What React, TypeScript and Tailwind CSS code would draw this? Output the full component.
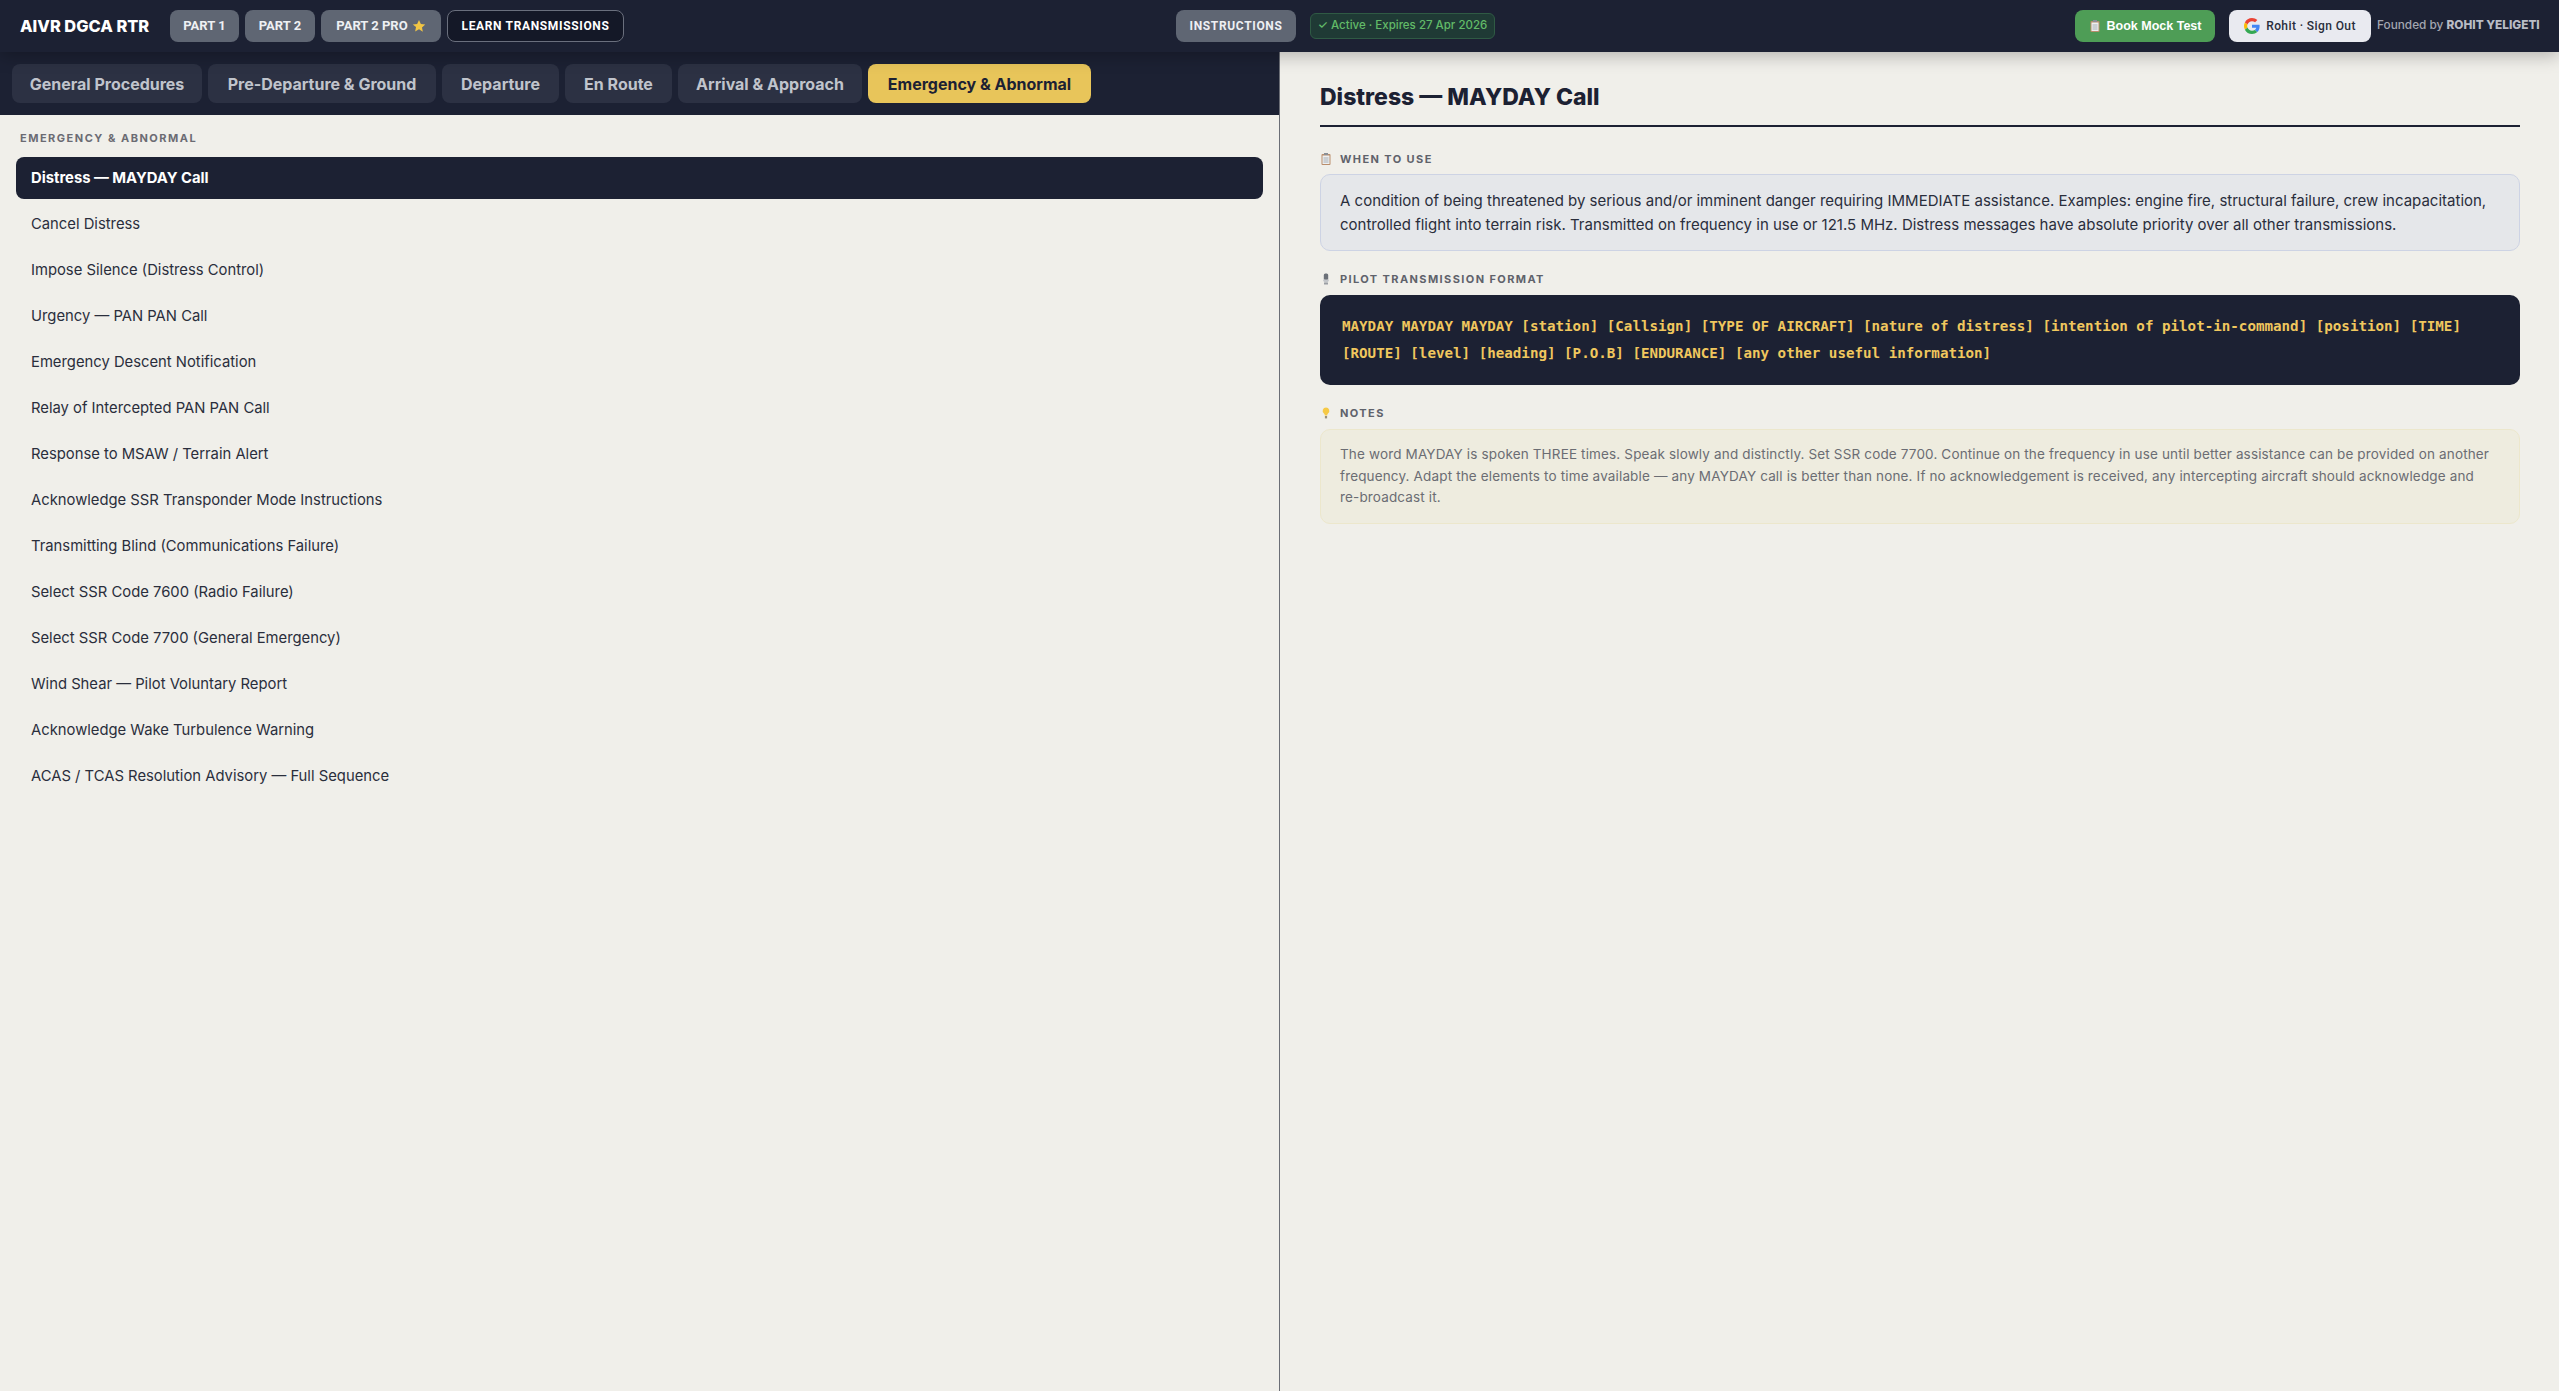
const navy = "bg-[#1c2133]";

const tabs = [
  { label: "General Procedures", width: "w-[190px]" },
  { label: "Pre-Departure & Ground", width: "w-[228px]" },
  { label: "Departure", width: "w-[117px]" },
  { label: "En Route", width: "w-[107px]" },
  { label: "Arrival & Approach", width: "w-[184px]" },
];

const items = [
  "Distress — MAYDAY Call",
  "Cancel Distress",
  "Impose Silence (Distress Control)",
  "Urgency — PAN PAN Call",
  "Emergency Descent Notification",
  "Relay of Intercepted PAN PAN Call",
  "Response to MSAW / Terrain Alert",
  "Acknowledge SSR Transponder Mode Instructions",
  "Transmitting Blind (Communications Failure)",
  "Select SSR Code 7600 (Radio Failure)",
  "Select SSR Code 7700 (General Emergency)",
  "Wind Shear — Pilot Voluntary Report",
  "Acknowledge Wake Turbulence Warning",
  "ACAS / TCAS Resolution Advisory — Full Sequence",
];

const ClipboardIcon = ({ size = 12 }: { size?: number }) => (
  <svg width={size} height={size} viewBox="0 0 12 12">
    <rect x="1.5" y="1" width="9" height="11" rx="1" fill="#b98d6b" />
    <rect x="2.5" y="2.5" width="7" height="8.5" fill="#eceff1" />
    <rect x="4" y="0" width="4" height="2" fill="#8a8f96" />
    <path d="M3.5 5h5M3.5 7h5M3.5 9h5" stroke="#9aa0a6" strokeWidth="0.8" />
  </svg>
);

const MicIcon = () => (
  <svg width="12" height="12" viewBox="0 0 12 12">
    <rect x="3.8" y="0.5" width="4.4" height="6.5" rx="1.6" fill="#6b7078" />
    <path d="M3 6.5c0 2 1.3 3 3 3s3-1 3-3" fill="#c3c6ca" />
    <rect x="4" y="9.5" width="4" height="2" fill="#9a9ea4" />
  </svg>
);

const BulbIcon = () => (
  <svg width="12" height="12" viewBox="0 0 12 12">
    <path d="M6 0.5a3.4 3.4 0 0 0-2 6.1c.5.5.7 1 .8 2h2.4c.1-1 .3-1.5.8-2a3.4 3.4 0 0 0-2-6.1z" fill="#f6c945" />
    <rect x="4.9" y="9" width="2.2" height="2.4" fill="#9a8f7a" />
  </svg>
);

const StarIcon = () => (
  <svg width="14" height="14" viewBox="0 0 24 24">
    <path d="M12 1.5l3.2 6.9 7.5.9-5.6 5.1 1.5 7.5L12 17.7l-6.6 3.7 1.5-7.5L1.300 9.300l7.500-.9z" fill="#f1c544" />
  </svg>
);

const GoogleIcon = () => (
  <svg width="16" height="16" viewBox="0 0 48 48">
    <path fill="#EA4335" d="M24 9.500c3.500 0 6.700 1.200 9.200 3.600l6.900-6.900C35.900 2.400 30.500 0 24 0 14.600 0 6.500 5.400 2.600 13.200l8 6.200C12.500 13.600 17.800 9.500 24 9.500z" />
    <path fill="#4285F4" d="M46.900 24.500c0-1.600-.1-3.100-.4-4.500H24v9h12.900c-.6 3-2.200 5.500-4.700 7.200l7.700 6c4.500-4.200 7-10.300 7-17.700z" />
    <path fill="#FBBC05" d="M10.500 28.600c-.5-1.400-.8-3-.8-4.600s.3-3.200.8-4.600l-8-6.200C.9 16.500 0 20.100 0 24s.9 7.500 2.600 10.800l7.900-6.200z" />
    <path fill="#34A853" d="M24 48c6.500 0 11.900-2.100 15.900-5.800l-7.700-6c-2.100 1.400-4.900 2.300-8.200 2.300-6.200 0-11.500-4.200-13.400-9.800l-8 6.200C6.500 42.600 14.600 48 24 48z" />
  </svg>
);

const SectionLabel = ({ icon, children }: { icon: React.ReactNode; children: React.ReactNode }) => (
  <div className="flex items-center gap-2 h-[14px] text-[11px] font-bold tracking-[1.4px] text-[#5f626b] font-['Inter',sans-serif]">
    {icon}
    <span>{children}</span>
  </div>
);

export default function App() {
  return (
    <div className="h-screen w-full flex flex-col overflow-hidden bg-[#f0efea] font-['Inter',sans-serif]">
      {/* top bar */}
      <header className={`${navy} relative z-10 h-[52px] shrink-0 flex items-center pl-5 pr-[19px] shadow-[0_4px_16px_rgba(0,0,0,0.25)]`}>
        <span className="w-[150px] text-[16.4px] font-extrabold text-white whitespace-nowrap">AIVR DGCA RTR</span>
        <nav className="flex items-center gap-[6px] font-['Roboto',sans-serif] text-[13px] font-bold text-[#eef0f3]">
          <span className="w-[69px] h-8 flex items-center justify-center rounded-lg bg-[#5f6673]">PART 1</span>
          <span className="w-[70px] h-8 flex items-center justify-center rounded-lg bg-[#5f6673]">PART 2</span>
          <span className="w-[120px] h-8 flex items-center justify-center gap-1 rounded-lg bg-[#5f6673]">PART 2 PRO <StarIcon /></span>
          <span className="w-[177px] h-8 flex items-center justify-center rounded-lg bg-[#141827] border border-[#6a6f7d] text-[12px] tracking-[0.65px] text-white">LEARN TRANSMISSIONS</span>
        </nav>
        <span className="ml-[552px] w-[120px] h-8 flex items-center justify-center rounded-lg bg-[#5f6673] font-['Roboto',sans-serif] text-[12px] font-bold tracking-[0.65px] text-[#eef0f3]">INSTRUCTIONS</span>
        <span className="ml-[14px] w-[185px] h-[26px] flex items-center justify-center rounded-md border border-[#2f5a44] bg-[#1f3a35] text-[11.5px] font-medium text-[#62bb68] whitespace-nowrap">✓ Active · Expires 27 Apr 2026</span>
        <div className="ml-auto flex items-center">
          <span className="w-[140px] h-8 flex items-center justify-center gap-[6px] rounded-lg bg-[#4e9d56] font-['Liberation_Sans',sans-serif] text-[12.5px] font-bold text-white">
            <ClipboardIcon />Book Mock Test
          </span>
          <span className="ml-[14px] w-[142px] h-8 flex items-center justify-center gap-[6px] rounded-lg bg-[#e9eaf0] font-['Roboto',sans-serif] text-[12px] font-medium tracking-[0.4px] text-[#2a2e3c]">
            <GoogleIcon />Rohit · Sign Out
          </span>
          <span className="ml-[6px] w-[163px] text-[11.8px] font-medium text-[#a3a6b0] whitespace-nowrap">Founded by <b className="font-extrabold text-[#b9bcc5]">ROHIT YELIGETI</b></span>
        </div>
      </header>

      <div className="flex-1 flex min-h-0">
        {/* left pane */}
        <div className="w-[1280px] shrink-0 flex flex-col border-r border-[#6b6e76]">
          <div className={`${navy} h-[63px] shrink-0 flex items-center gap-[6px] pl-3`}>
            {tabs.map((t) => (
              <span key={t.label} className={`${t.width} h-[39px] flex items-center justify-center rounded-lg bg-[#2c3143] text-[16px] font-bold text-[#c0c4cc] whitespace-nowrap`}>{t.label}</span>
            ))}
            <span className="w-[223px] h-[39px] flex items-center justify-center rounded-lg bg-[#e8c55a] text-[16px] font-bold text-[#1c2133] whitespace-nowrap">Emergency &amp; Abnormal</span>
          </div>
          <div className="px-4 pt-4">
            <div className="pl-1 h-[14px] mb-[12px] flex items-center text-[11px] font-bold tracking-[1.5px] text-[#6b6b73]">EMERGENCY &amp; ABNORMAL</div>
            <ul className="flex flex-col gap-1">
              {items.map((it, i) => (
                <li
                  key={it}
                  className={`h-[42px] pl-[15px] flex items-center rounded-lg text-[14.8px] ${i === 0 ? `${navy} font-bold text-white` : "text-[#2a2e3c]"}`}
                >
                  {it}
                </li>
              ))}
            </ul>
          </div>
        </div>

        {/* right pane */}
        <main className="flex-1 min-w-0 pl-10 pr-[39px] pt-[29px]">
          <h1 className="h-[32px] flex items-center text-[23px] font-extrabold text-[#1c2133]">Distress — MAYDAY Call</h1>
          <div className="mt-[12px] mb-[25px] h-[2px] bg-[#1c2133]" />

          <SectionLabel icon={<ClipboardIcon />}>WHEN TO USE</SectionLabel>
          <div className="mt-[8px] h-[77px] px-[19px] flex items-center rounded-[10px] border border-[#cdd3e4] bg-[#e5e7ea] text-[15px] leading-[24px] text-[#2a2e3c]">
            <p>A condition of being threatened by serious and/or imminent danger requiring IMMEDIATE assistance. Examples: engine fire, structural failure, crew incapacitation, controlled flight into terrain risk. Transmitted on frequency in use or 121.5 MHz. Distress messages have absolute priority over all other transmissions.</p>
          </div>

          <div className="mt-[21px]">
            <SectionLabel icon={<MicIcon />}>PILOT TRANSMISSION FORMAT</SectionLabel>
          </div>
          <div className={`${navy} mt-[9px] h-[90px] px-[22px] flex items-center rounded-[10px] font-['DejaVu_Sans_Mono',monospace] text-[14.2px] font-bold leading-[27px] text-[#f0c75e]`}>
            <p>MAYDAY MAYDAY MAYDAY [station] [Callsign] [TYPE OF AIRCRAFT] [nature of distress] [intention of pilot-in-command] [position] [TIME] [ROUTE] [level] [heading] [P.O.B] [ENDURANCE] [any other useful information]</p>
          </div>

          <div className="mt-[21px]">
            <SectionLabel icon={<BulbIcon />}>NOTES</SectionLabel>
          </div>
          <div className="mt-[9px] h-[95px] px-[19px] flex items-center rounded-[10px] border border-[#ece7cc] bg-[#eeecdf] text-[13.5px] tracking-[0.15px] leading-[21.5px] text-[#6b6d73]">
            <p className="whitespace-nowrap">
              The word MAYDAY is spoken THREE times. Speak slowly and distinctly. Set SSR code 7700. Continue on the frequency in use until better assistance can be provided on another<br />
              frequency. Adapt the elements to time available — any MAYDAY call is better than none. If no acknowledgement is received, any intercepting aircraft should acknowledge and<br />
              re-broadcast it.
            </p>
          </div>
        </main>
      </div>
    </div>
  );
}
